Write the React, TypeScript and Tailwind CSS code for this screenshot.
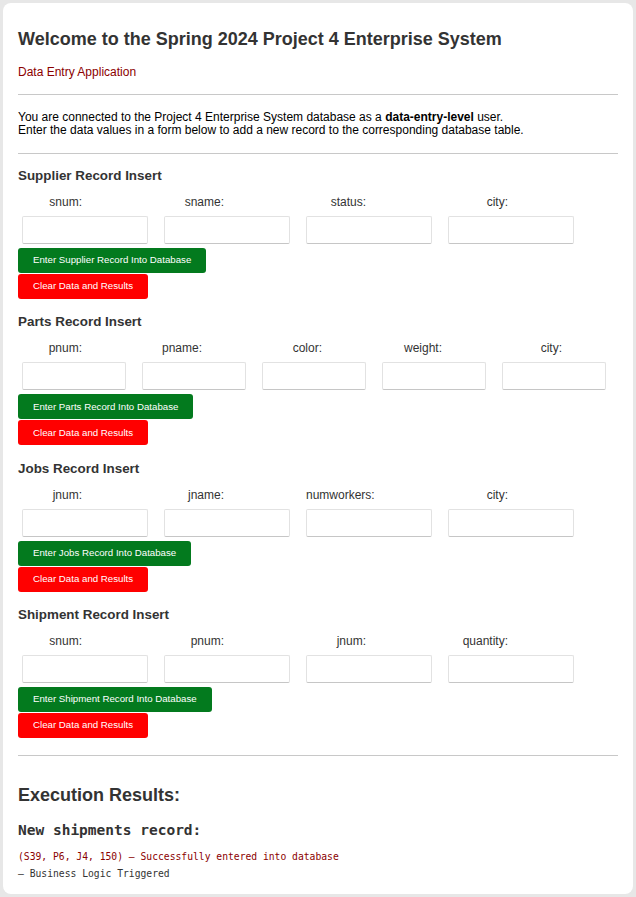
import React from "react";

type Section = { title: string; labels: string[]; width: string; button: string };

const sections: Section[] = [
  { title: "Supplier Record Insert", labels: ["snum:", "sname:", "status:", "city:"], width: "w-[126px]", button: "Enter Supplier Record Into Database" },
  { title: "Parts Record Insert", labels: ["pnum:", "pname:", "color:", "weight:", "city:"], width: "w-[104px]", button: "Enter Parts Record Into Database" },
  { title: "Jobs Record Insert", labels: ["jnum:", "jname:", "numworkers:", "city:"], width: "w-[126px]", button: "Enter Jobs Record Into Database" },
  { title: "Shipment Record Insert", labels: ["snum:", "pnum:", "jnum:", "quantity:"], width: "w-[126px]", button: "Enter Shipment Record Into Database" },
];

function RecordSection({ s, first }: { s: Section; first: boolean }) {
  return (
    <div className={first ? "mt-[14px]" : "mt-[15.33px]"}>
      <h3 className="text-[13.4px] leading-[16px] font-bold text-[#333]">{s.title}</h3>
      <div className="mt-[11px] flex gap-[16px] pl-[4px]">
        {s.labels.map((l, i) => (
          <div key={i} className="flex flex-col">
            <div className="w-[60px] whitespace-nowrap text-right text-[12px] leading-[14px] text-[#333]">{l}</div>
            <input
              type="text"
              className={`${s.width} mt-[7px] h-[28px] rounded-[2px] border border-[#e2e2e2] border-b-[#c6c6c6] bg-white outline-none`}
            />
          </div>
        ))}
      </div>
      <div className="mt-[4px] flex flex-col items-start gap-[1px]">
        <button className="h-[25px] rounded-[3px] bg-[#037a1e] px-[15px] text-[9.7px] text-white">{s.button}</button>
        <button className="h-[25px] rounded-[3px] bg-[#ff0000] px-[15px] text-[9.7px] text-white">Clear Data and Results</button>
      </div>
    </div>
  );
}

export default function App() {
  return (
    <div className="min-h-screen bg-[#e7e7e7] p-[3px]" style={{ fontFamily: '"Liberation Sans", Arial, sans-serif' }}>
      <div className="rounded-[8px] bg-white px-[15px] pt-[25px] pb-[14px]">
        <h1 className="text-[18px] leading-[22px] font-bold text-[#333]">Welcome to the Spring 2024 Project 4 Enterprise System</h1>
        <p className="mt-[15px] text-[12px] leading-[14px] text-[#8b0000]">Data Entry Application</p>
        <hr className="mt-[15px] border-0 border-t border-[#c8c8c8]" />
        <p className="mt-[16px] text-[12px] leading-[13px] text-black">
          You are connected to the Project 4 Enterprise System database as a <b>data-entry-level</b> user.
          <br />
          Enter the data values in a form below to add a new record to the corresponding database table.
        </p>
        <hr className="mt-[16px] border-0 border-t border-[#c8c8c8]" />
        {sections.map((s, i) => (
          <RecordSection key={i} s={s} first={i === 0} />
        ))}
        <hr className="mt-[17px] border-0 border-t border-[#c8c8c8]" />
        <h2 className="mt-[28px] text-[18px] leading-[22px] font-bold text-[#333]">Execution Results:</h2>
        <div style={{ fontFamily: '"DejaVu Sans Mono", "Liberation Mono", monospace' }}>
          <h3 className="mt-[15px] text-[14.5px] leading-[18px] font-bold text-[#333]">New shipments record:</h3>
          <p className="mt-[12px] text-[9.7px] leading-[12px] text-[#8b0000]">(S39, P6, J4, 150) – Successfully entered into database</p>
          <p className="mt-[5px] text-[9.7px] leading-[12px] text-[#333]">– Business Logic Triggered</p>
        </div>
      </div>
    </div>
  );
}
